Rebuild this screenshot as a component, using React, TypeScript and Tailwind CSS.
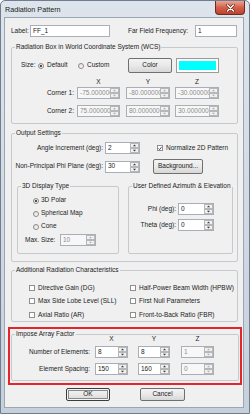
import type { ReactNode } from 'react'

function TextBox({ className, value }: { className: string; value: string }) {
  return (
    <div className={`flex h-[12px] items-center border border-[#a9afb8] bg-white pl-[2px] text-[6.5px] leading-none ${className}`}>
      {value}
    </div>
  )
}

function Spin({ className, value, disabled }: { className: string; value: string; disabled?: boolean }) {
  const arrow = disabled ? '#b0b0b0' : '#3a3a3a'
  return (
    <div
      className={`flex h-[12px] items-center border border-[#a9afb8] ${
        disabled ? 'bg-[#f7f7f7] text-[#8d8d8d]' : 'bg-white'
      } ${className}`}
    >
      <span className="flex-1 overflow-hidden whitespace-nowrap pl-[2px] text-[6.5px] leading-none">{value}</span>
      <svg width="9" height="10" viewBox="0 0 9 10" className="shrink-0">
        <rect x="0.5" y="0.5" width="8" height="4" fill="#f1f1f1" stroke="#b7b7b7" />
        <rect x="0.5" y="5.5" width="8" height="4" fill="#f1f1f1" stroke="#b7b7b7" />
        <polygon points="3,3.2 6,3.2 4.5,1.6" fill={arrow} />
        <polygon points="3,6.8 6,6.8 4.5,8.4" fill={arrow} />
      </svg>
    </div>
  )
}

function Radio({ checked }: { checked?: boolean }) {
  return (
    <span className="flex h-[6px] w-[6px] shrink-0 items-center justify-center rounded-full border border-[#8a8a8a] bg-gradient-to-br from-[#dcdcdc] to-white">
      {checked && <span className="h-[2px] w-[2px] rounded-full bg-[#1a1a1a]" />}
    </span>
  )
}

function Check({ checked }: { checked?: boolean }) {
  return (
    <span className="flex h-[6px] w-[6px] shrink-0 items-center justify-center border border-[#8e8f8f] bg-white">
      {checked && (
        <svg width="5" height="5" viewBox="0 0 5 5">
          <path d="M0.6 2.4 L2 3.9 L4.4 0.8" fill="none" stroke="#222" strokeWidth="1" />
        </svg>
      )}
    </span>
  )
}

function Button({ className, children, primary }: { className: string; children: ReactNode; primary?: boolean }) {
  return (
    <button
      className={`flex items-center justify-center rounded-[2px] border ${
        primary ? 'border-[#3d3d3d] shadow-[inset_0_0_0_1px_#f4f4f4,inset_0_0_0_2px_#8a8a8a]' : 'border-[#707070]'
      } bg-gradient-to-b from-[#f3f3f3] via-[#e9e9e9] to-[#d7d7d7] text-[6.5px] leading-none text-[#1b1b1b] ${className}`}
    >
      {children}
    </button>
  )
}

function Group({ title, className, children }: { title: string; className: string; children: ReactNode }) {
  return (
    <fieldset className={`rounded-[2px] border border-[#c6cacf] ${className}`}>
      <legend className="ml-[3px] px-[1px] text-[6.5px] leading-[8px]">{title}</legend>
      {children}
    </fieldset>
  )
}

export default function App() {
  return (
    <div className="flex h-[414px] w-[250px] flex-col overflow-hidden rounded-t-[5px] border border-[#6e7e90] bg-gradient-to-b from-[#dde4ec] to-[#c6d0db] font-['Liberation_Sans',Arial,sans-serif] text-[#1b1b1b]">
      {/* title bar */}
      <div className="flex h-[17px] items-start">
        <span className="ml-[4px] mt-[4px] text-[7.2px] leading-[9px]">Radiation Pattern</span>
        <div className="ml-auto mr-[4px] flex h-[14px] w-[30px] items-center justify-center rounded-b-[4px] border border-t-0 border-[#6b2a22] bg-gradient-to-b from-[#e9a593] via-[#d2604b] to-[#c0412c]">
          <svg width="9" height="8" viewBox="0 0 9 8">
            <path d="M1.5 1 L7.5 7 M7.5 1 L1.5 7" stroke="#5a1d15" strokeWidth="2.6" strokeLinecap="round" />
            <path d="M1.5 1 L7.5 7 M7.5 1 L1.5 7" stroke="#ffffff" strokeWidth="1.5" strokeLinecap="round" />
          </svg>
        </div>
      </div>

      {/* client */}
      <div className="ml-[4px] flex h-[389px] w-[238px] flex-col bg-[#f0f0f0] text-[6.5px] leading-none shadow-[0_0_0_1px_#9aa6b3]">
        <div className="mt-[7px] flex h-[12px] items-center pl-[6px]">
          <span className="w-[19px]">Label:</span>
          <TextBox className="w-[80px]" value="FF_1" />
          <span className="ml-[18px] w-[67px]">Far Field Frequency:</span>
          <TextBox className="w-[42px]" value="1" />
        </div>

        <Group title="Radiation Box in World Coordinate System (WCS)" className="ml-[6px] mt-[6px] h-[81px] w-[227px]">
          <div className="mt-[7px] flex h-[15px] items-center">
            <span className="ml-[9px] w-[17px]">Size:</span>
            <Radio checked />
            <span className="ml-[3px] w-[31px]">Default</span>
            <Radio />
            <span className="ml-[3px] w-[41px]">Custom</span>
            <Button className="h-[15px] w-[44px]">Color</Button>
            <div className="ml-[4px] h-[15px] w-[43px] border border-[#9b9b9b] bg-white p-[2px]">
              <div className="h-full w-full bg-[#00ffff]" />
            </div>
          </div>
          <div className="mt-[5px] flex h-[8px] items-center">
            <span className="w-[65px]" />
            <span className="w-[43px] text-center">X</span>
            <span className="ml-[6px] w-[44px] text-center">Y</span>
            <span className="ml-[5px] w-[44px] text-center">Z</span>
          </div>
          <div className="mt-[1px] flex h-[12px] items-center">
            <span className="w-[62px] text-right">Corner 1:</span>
            <Spin className="ml-[3px] w-[43px]" value="-75.000000" disabled />
            <Spin className="ml-[6px] w-[44px]" value="-80.000000" disabled />
            <Spin className="ml-[5px] w-[44px]" value="-30.000000" disabled />
          </div>
          <div className="mt-[6px] flex h-[12px] items-center">
            <span className="w-[62px] text-right">Corner 2:</span>
            <Spin className="ml-[3px] w-[43px]" value="75.000000" disabled />
            <Spin className="ml-[6px] w-[44px]" value="80.000000" disabled />
            <Spin className="ml-[5px] w-[44px]" value="30.000000" disabled />
          </div>
        </Group>

        <Group title="Output Settings" className="ml-[6px] mt-[5px] h-[133px] w-[227px]">
          <div className="mt-[5px] flex h-[12px] items-center">
            <span className="w-[91px] text-right">Angle Increment (deg):</span>
            <Spin className="ml-[2px] w-[35px]" value="2" />
            <span className="ml-[17px]">
              <Check checked />
            </span>
            <span className="ml-[3px]">Normalize 2D Pattern</span>
          </div>
          <div className="mt-[5px] flex h-[15px] items-center">
            <span className="w-[91px] text-right">Non-Principal Phi Plane (deg):</span>
            <Spin className="ml-[2px] w-[35px]" value="30" />
            <Button className="ml-[13px] h-[15px] w-[50px]">Background...</Button>
          </div>
          <div className="mt-[8px] flex">
            <Group title="3D Display Type" className="ml-[5px] h-[72px] w-[102px]">
              <div className="mt-[6px] flex h-[9px] items-center pl-[15px]">
                <Radio checked />
                <span className="ml-[2px]">3D Polar</span>
              </div>
              <div className="mt-[4px] flex h-[9px] items-center pl-[15px]">
                <Radio />
                <span className="ml-[2px]">Spherical Map</span>
              </div>
              <div className="mt-[4px] flex h-[9px] items-center pl-[15px]">
                <Radio />
                <span className="ml-[2px]">Cone</span>
              </div>
              <div className="mt-[3px] flex h-[12px] items-center">
                <span className="ml-[7px] w-[35px]">Max. Size:</span>
                <Spin className="w-[36px]" value="10" disabled />
              </div>
            </Group>
            <Group title="User Defined Azimuth & Elevation" className="ml-[9px] h-[72px] w-[105px]">
              <div className="mt-[13px] flex h-[12px] items-center">
                <span className="w-[47px] text-right">Phi (deg):</span>
                <Spin className="ml-[2px] w-[36px]" value="0" />
              </div>
              <div className="mt-[4px] flex h-[12px] items-center">
                <span className="w-[47px] text-right">Theta (deg):</span>
                <Spin className="ml-[2px] w-[36px]" value="0" />
              </div>
            </Group>
          </div>
        </Group>

        <Group title="Additional Radiation Characteristics" className="ml-[6px] mt-[4px] h-[56px] w-[227px]">
          <div className="mt-[7px] grid grid-cols-[101px_1fr] pl-[17px]">
            {[
              ['Directive Gain (DG)', 'Half-Power Beam Width (HPBW)'],
              ['Max Side Lobe Level (SLL)', 'First Null Parameters'],
              ['Axial Ratio (AR)', 'Front-to-Back Ratio (FBR)'],
            ].map((pair) =>
              pair.map((label) => (
                <div key={label} className="flex h-[13.5px] items-center">
                  <Check />
                  <span className="ml-[3px] whitespace-nowrap">{label}</span>
                </div>
              ))
            )}
          </div>
        </Group>

        {/* highlighted block */}
        <div className="ml-[3px] mt-[5px] h-[58px] w-[234px] border-2 border-[#e3262b]">
          <Group title="Impose Array Factor" className="ml-[1px] mt-[1px] h-[51px] w-[228px]">
            <div className="-mt-[3px] flex h-[8px] items-center">
              <span className="w-[83px]" />
              <span className="w-[33px] text-center">X</span>
              <span className="ml-[10px] w-[32px] text-center">Y</span>
              <span className="ml-[11px] w-[33px] text-center">Z</span>
            </div>
            <div className="mt-[3px] flex h-[12px] items-center">
              <span className="w-[78px] text-right">Number of Elements:</span>
              <Spin className="ml-[5px] w-[33px]" value="8" />
              <Spin className="ml-[10px] w-[32px]" value="8" />
              <Spin className="ml-[11px] w-[33px]" value="1" disabled />
            </div>
            <div className="mt-[5px] flex h-[12px] items-center">
              <span className="w-[78px] text-right">Element Spacing:</span>
              <Spin className="ml-[5px] w-[33px]" value="150" />
              <Spin className="ml-[10px] w-[32px]" value="160" />
              <Spin className="ml-[11px] w-[33px]" value="0" disabled />
            </div>
          </Group>
        </div>

        <div className="mt-[3px] flex">
          <Button primary className="ml-[61px] h-[13px] w-[44px]">
            OK
          </Button>
          <Button className="ml-[30px] h-[13px] w-[45px]">Cancel</Button>
        </div>
      </div>
    </div>
  )
}
